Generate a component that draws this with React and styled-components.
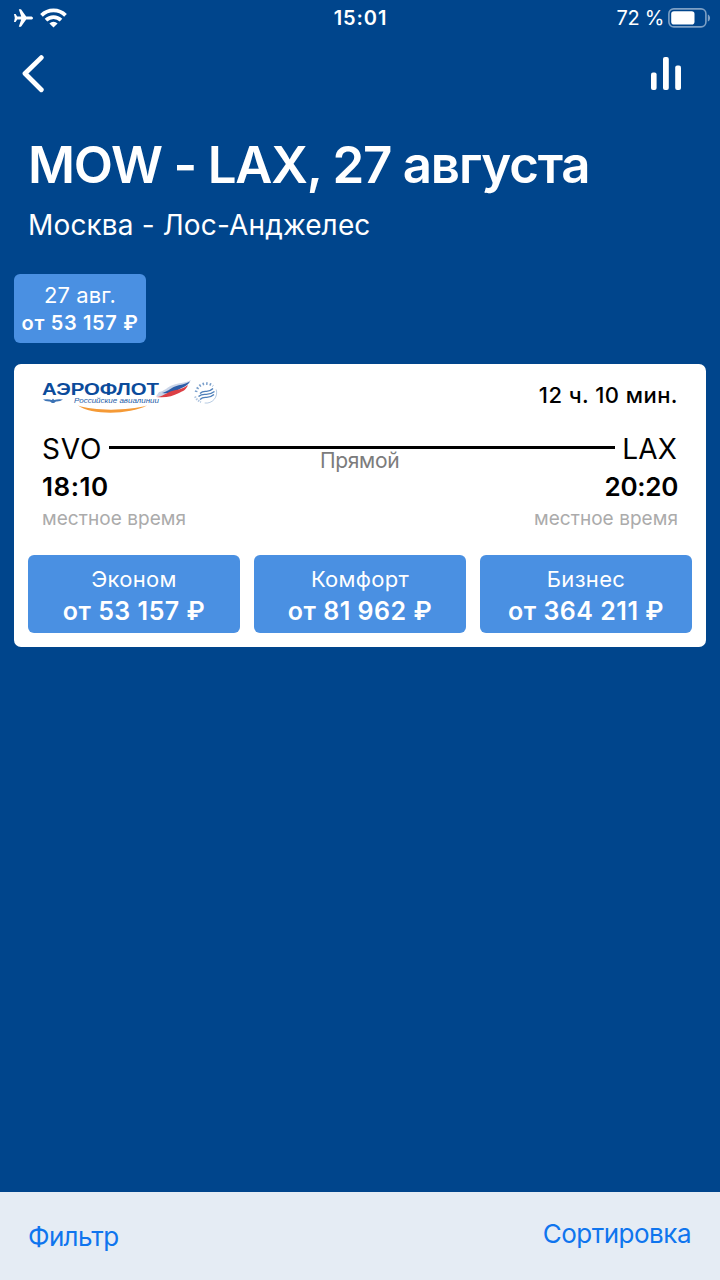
import React from 'react';
import styled, { createGlobalStyle } from 'styled-components';

const Global = createGlobalStyle`
  * { box-sizing: border-box; }
  body { margin: 0; background: #00458c; }
`;

const Screen = styled.div`
  width: 720px;
  height: 1280px;
  display: flex;
  flex-direction: column;
  overflow: hidden;
  background: #00458c;
  color: #fff;
  font-family: Inter, "Liberation Sans", sans-serif;
`;

const Label = styled.span`
  display: block;
  margin: 0;
  white-space: nowrap;
  font-size: ${p => p.$size}px;
  line-height: ${p => p.$line}px;
  font-weight: ${p => p.$weight || 400};
  letter-spacing: ${p => p.$track || 0}px;
  color: ${p => p.$color || 'inherit'};
`;

const StatusBar = styled.header`
  height: 36px;
  display: grid;
  grid-template-columns: 1fr auto 1fr;
  align-items: center;
  padding: 0 12px 0 13px;
`;

const StatusSide = styled.div`
  display: flex;
  align-items: center;
  gap: ${p => p.$gap}px;
  justify-content: ${p => (p.$end ? 'flex-end' : 'flex-start')};
  svg { display: block; }
`;

const BatteryBox = styled.div`
  margin-right: -3px;
`;

const NavBar = styled.nav`
  height: 76px;
  display: flex;
  justify-content: space-between;
  align-items: center;
  padding: 0 38px 0 22px;
`;

const IconButton = styled.button`
  border: 0;
  padding: 0;
  background: none;
  display: flex;
`;

const Heading = styled.div`
  padding: 21px 28px 0;
`;

const DateChip = styled.button`
  align-self: flex-start;
  display: flex;
  flex-direction: column;
  align-items: center;
  width: 132px;
  height: 69px;
  margin: 20px 0 0 14px;
  padding: 8px 0 0;
  border: 0;
  border-radius: 6px;
  background: #4a90e2;
  color: #fff;
  font-family: inherit;
`;

const Card = styled.article`
  margin: 21px 14px 0;
  height: 283px;
  padding: 14px 14px;
  border-radius: 7px;
  background: #fff;
  color: #000;
`;

const CardHead = styled.div`
  display: flex;
  align-items: flex-start;
  justify-content: space-between;
  padding: 0 14px 0 12px;
  height: 53px;
`;

const LogoBox = styled.div`
  margin-top: -4px;
  svg { display: block; }
`;

const Route = styled.div`
  display: flex;
  height: 36px;
  padding: 0 15px 0 14px;
`;

const Track = styled.div`
  flex: 1;
  margin: 15px 7px 0 7px;
  padding-right: 5px;
  display: flex;
  justify-content: center;
  border-top: 3px solid #000;
`;

const Ends = styled.div`
  display: flex;
  justify-content: space-between;
  padding: 0 14px;
`;

const Fares = styled.div`
  display: grid;
  grid-template-columns: repeat(3, 1fr);
  gap: 14px;
  margin-top: 23px;
`;

const FareButton = styled.button`
  display: flex;
  flex-direction: column;
  align-items: center;
  height: 78px;
  padding: 8px 0 0;
  border: 0;
  border-radius: 6px;
  background: #4a90e2;
  color: #fff;
  font-family: inherit;
`;

const Footer = styled.footer`
  height: 88px;
  margin-top: auto;
  padding: 24px 29px 0 28px;
  display: flex;
  justify-content: space-between;
  background: #e5ecf4;
  color: #0f75ee;
`;

const FooterAction = styled.a`
  padding-top: ${p => p.$drop || 0}px;
`;

const Plane = () => (
  <svg width="20" height="20" viewBox="0 0 20 20" fill="#fff">
    <path d="M20 10c0-1-1-1.600-2.300-1.600h-4.500L8 1.200H5.800L8.200 8.400H4.200L2.600 6H1l.8 4L1 14h1.600l1.600-2.400h4L5.800 18.800H8l5.200-7.200h4.500C19 11.600 20 11 20 10z" />
  </svg>
);

const Wifi = () => (
  <svg width="27" height="20" viewBox="0 0 27 20" fill="none" stroke="#fff">
    <path d="M1.500 7.300a17 17 0 0 1 24 0" strokeWidth="3.800" />
    <path d="M6 12.200a10.800 10.800 0 0 1 15 0" strokeWidth="3.700" />
    <path d="M9.400 15.400a6 6 0 0 1 8.200 0L13.500 19.500z" fill="#fff" stroke="none" />
  </svg>
);

const Battery = () => (
  <svg width="43" height="20" viewBox="0 0 43 20">
    <rect x="0.900" y="0.900" width="37" height="18" rx="4.800" fill="none" stroke="#7da0c5" strokeWidth="1.600" />
    <rect x="3.200" y="3.200" width="23.300" height="13.400" rx="2.800" fill="#fff" />
    <path d="M39.800 6.500c3 1 3 6 0 7z" fill="#7da0c5" />
  </svg>
);

const Back = () => (
  <svg width="23" height="38" viewBox="0 0 23 38" fill="none" stroke="#fff" strokeWidth="4.800" strokeLinecap="round" strokeLinejoin="round">
    <path d="M19.300 2.600L3 18.500l16.300 16.300" />
  </svg>
);

const Bars = () => (
  <svg width="32" height="34" viewBox="0 0 32 34" fill="#fff">
    <rect x="1" y="15.500" width="5.600" height="17.500" rx="2" />
    <rect x="13" y="0" width="5.800" height="33" rx="2" />
    <rect x="25.200" y="8.500" width="5.800" height="24.500" rx="2" />
  </svg>
);

const AirlineLogo = () => (
  <svg width="178" height="40" viewBox="40 374 178 40" fontFamily="'Liberation Sans', sans-serif">
    <text x="42" y="395" fontSize="16" fontWeight="700" fill="#0b4b9b" textLength="117" lengthAdjust="spacingAndGlyphs">АЭРОФЛОТ</text>
    <text x="74" y="403" fontSize="7.500" fontStyle="italic" fill="#1c5aa6" textLength="85" lengthAdjust="spacingAndGlyphs">Российские авиалинии</text>
    <path d="M43 399.500q6-.8 9 .5 1-2.500 2 0 4-1.300 9-.5-3 2.300-7 2l-2 1.500h-2l-2-1.500q-5 .2-7-2z" fill="#3c73b5" />
    <path d="M78 405.500c15 5.500 50 5.500 69 0-17 9-55 10-69 0z" fill="#f59a36" />
    <path d="M159 392c6-1 8-5 14-7 6-2.200 11-1.500 18-5-2 4-5 6-9 8-8 5-14 9-26 8.500z" fill="#cbd5e8" />
    <path d="M162 393c5-1 8-4.500 13-6.500 5-2 10-2 15-5-2 3.500-5 5-9 6.700-6 3.500-11 6-19 4.800z" fill="#2d5da8" />
    <path d="M156 397c7-.5 10-4 16-6 5-1.500 10-1.500 16-6-2 5-5 6-9 8-7 3.500-13 5-23 4z" fill="#dc3f45" />
    <g fill="none" stroke="#4e7fb9">
      <path d="M216.200 389.500a10.500 10.500 0 0 1-11.500 13.500" strokeWidth=".8" opacity=".5" />
      <path d="M195 396.500a10.500 10.500 0 0 0 6 5.500" strokeWidth="2" strokeDasharray="1.500 1" opacity=".45" />
      <path d="M196 392a10.500 10.500 0 0 1 17-6" strokeWidth="2.600" strokeDasharray="1.500 2" opacity=".75" />
      <path d="M200 393.500c5-5 7 1 13-5M198.500 396.500c6-5 8 1 16-5M200 399.500c5-5 7 1 14-5" strokeWidth="1.400" />
    </g>
  </svg>
);

const fares = [
  { name: 'Эконом', price: 'от 53 157 ₽' },
  { name: 'Комфорт', price: 'от 81 962 ₽' },
  { name: 'Бизнес', price: 'от 364 211 ₽' },
];

export default function App() {
  return (
    <Screen>
      <Global />
      <StatusBar>
        <StatusSide $gap={7}>
          <Plane />
          <Wifi />
        </StatusSide>
        <Label $size={20} $line={36} $weight={600} $track={0.9}>15:01</Label>
        <StatusSide $end $gap={4}>
          <Label $size={20} $line={36} $track={-0.3}>72 %</Label>
          <BatteryBox><Battery /></BatteryBox>
        </StatusSide>
      </StatusBar>
      <NavBar>
        <IconButton aria-label="Назад"><Back /></IconButton>
        <IconButton aria-label="График цен"><Bars /></IconButton>
      </NavBar>
      <Heading>
        <Label as="h1" $size={51} $line={64} $weight={600} $track={-1.2}>MOW - LAX, 27 августа</Label>
        <Label $size={28} $line={57} $track={0.15}>Москва - Лос-Анджелес</Label>
      </Heading>
      <DateChip>
        <Label $size={22} $line={27} $track={0.1}>27 авг.</Label>
        <Label $size={20} $line={28} $weight={600} $track={0.65}>от 53 157 ₽</Label>
      </DateChip>
      <Card>
        <CardHead>
          <LogoBox><AirlineLogo /></LogoBox>
          <Label $size={22} $line={34} $weight={500} $track={0.45}>12 ч. 10 мин.</Label>
        </CardHead>
        <Route>
          <Label $size={28} $line={36} $track={0.8}>SVO</Label>
          <Track>
            <Label $size={21} $line={23} $track={-0.35} $color="#7c7c7c">Прямой</Label>
          </Track>
          <Label $size={28} $line={36} $track={0.2}>LAX</Label>
        </Route>
        <Ends>
          <Label $size={26} $line={39} $weight={600} $track={0.5}>18:10</Label>
          <Label $size={26} $line={39} $weight={600} $track={-0.3}>20:20</Label>
        </Ends>
        <Ends>
          <Label $size={19} $line={26} $color="#ababab" $track={0.05}>местное время</Label>
          <Label $size={19} $line={26} $color="#ababab" $track={0.05}>местное время</Label>
        </Ends>
        <Fares>
          {fares.map(f => (
            <FareButton key={f.name}>
              <Label $size={22} $line={32} $track={0.3}>{f.name}</Label>
              <Label $size={25} $line={33} $weight={600} $track={0.5}>{f.price}</Label>
            </FareButton>
          ))}
        </Fares>
      </Card>
      <Footer>
        <FooterAction $drop={3}><Label $size={26} $line={36} $track={-0.65}>Фильтр</Label></FooterAction>
        <FooterAction><Label $size={26} $line={36} $track={-0.5}>Сортировка</Label></FooterAction>
      </Footer>
    </Screen>
  );
}
